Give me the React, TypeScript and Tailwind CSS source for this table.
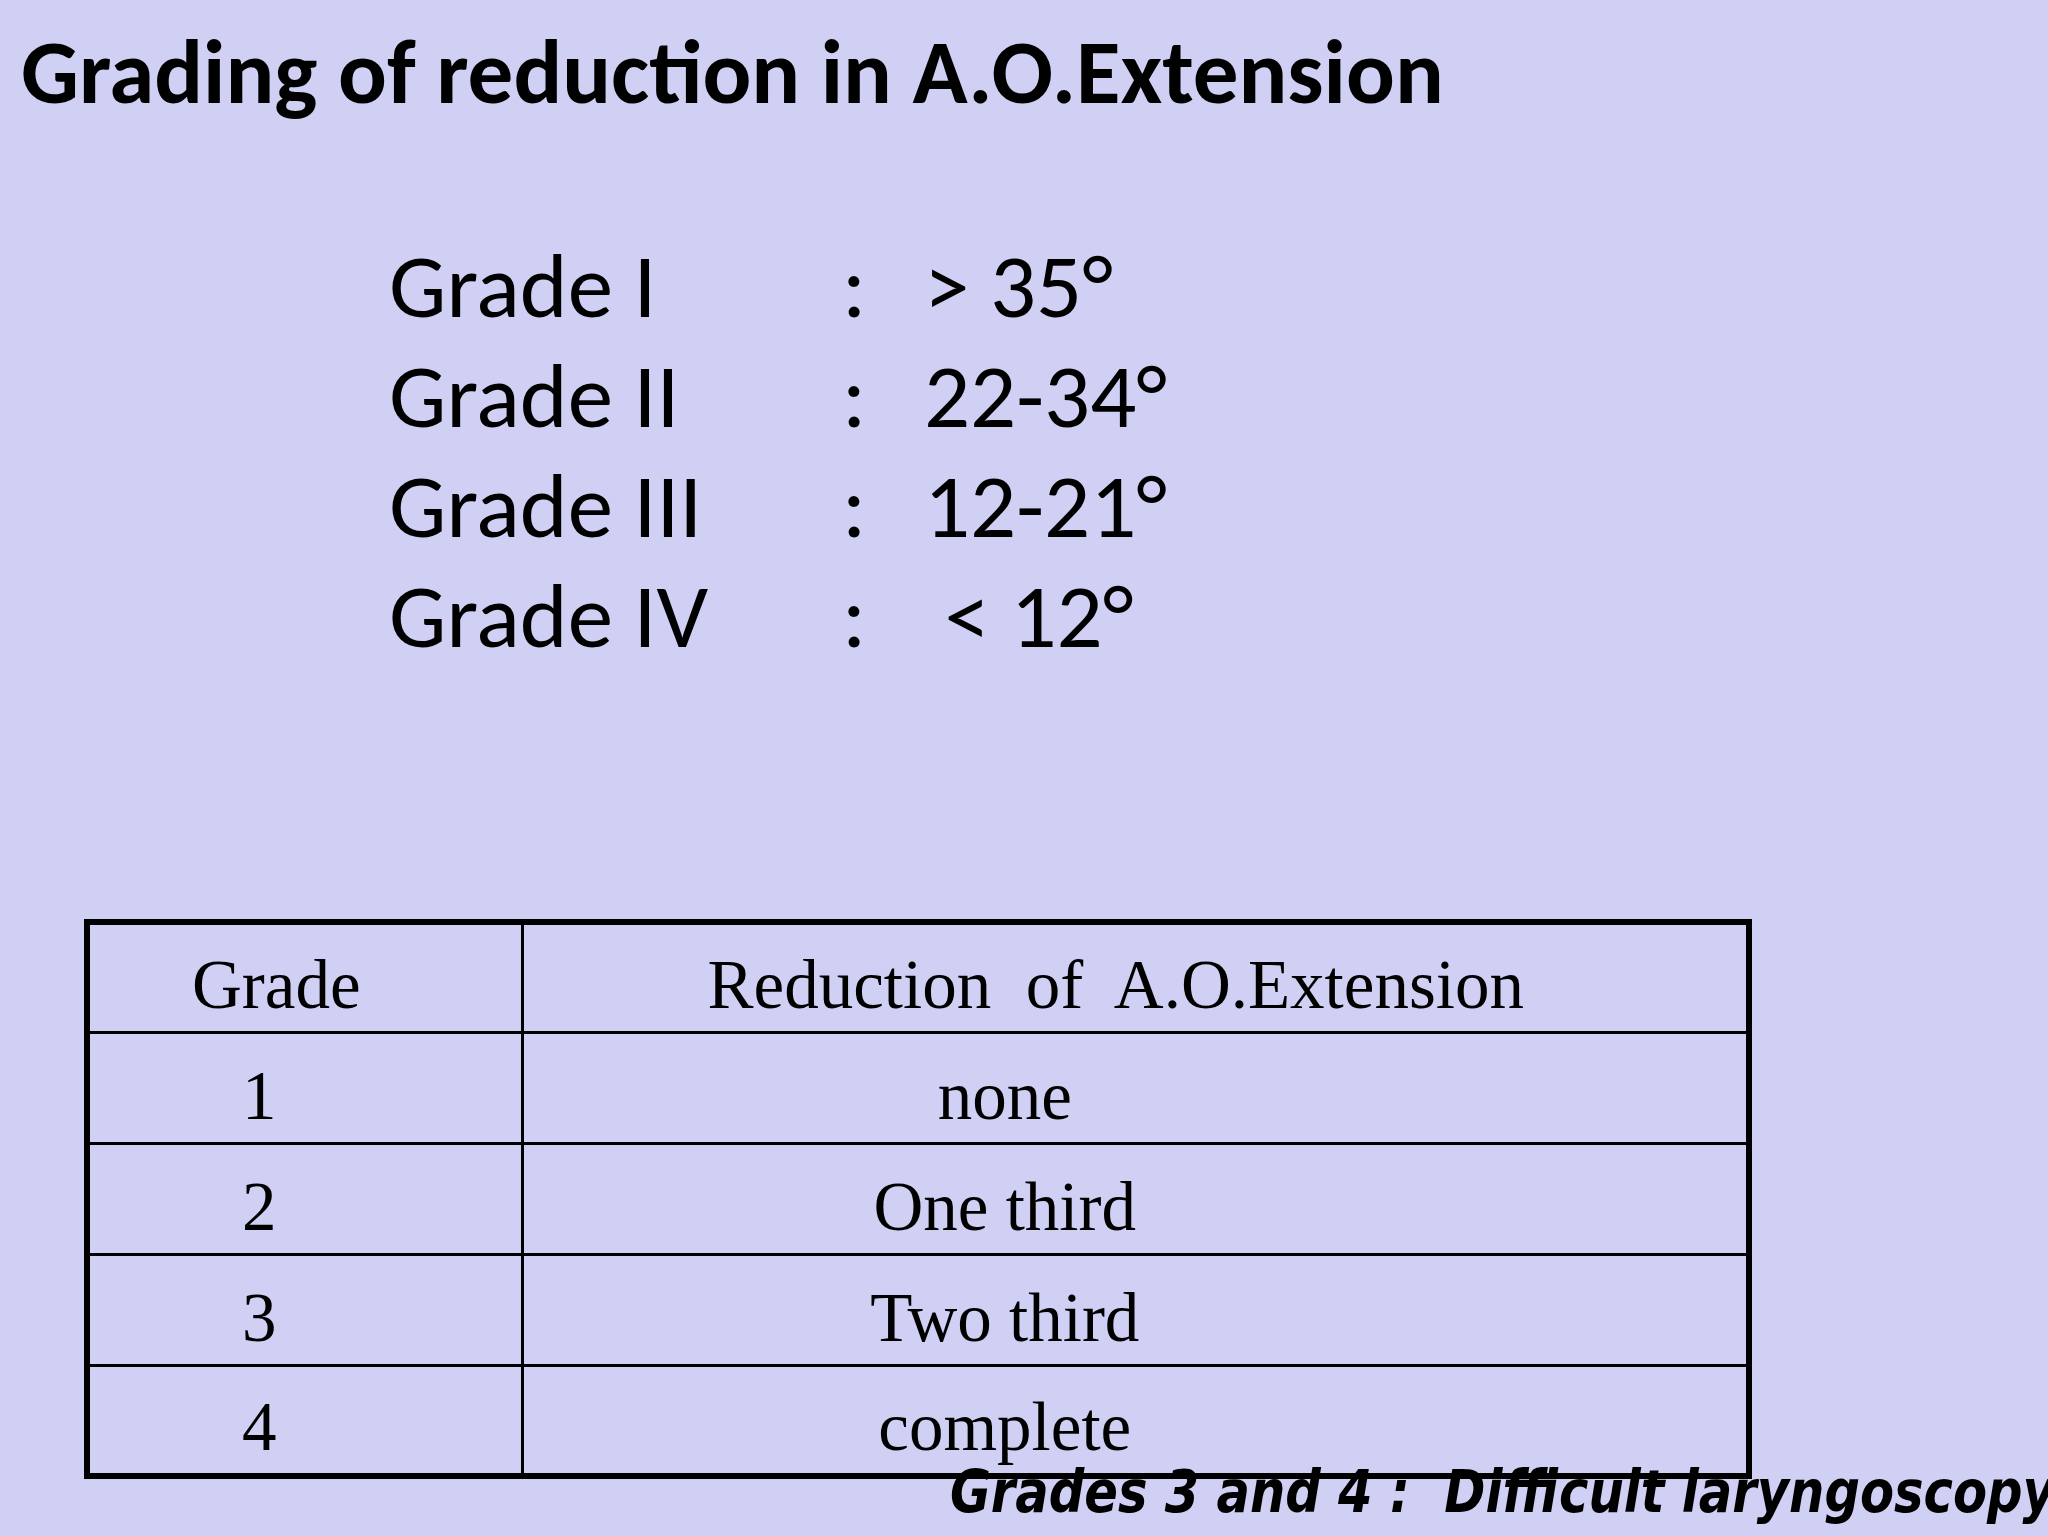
const grades = [
  { label: 'Grade I', value: '> 35°' },
  { label: 'Grade II', value: '22-34°' },
  { label: 'Grade III', value: '12-21°' },
  { label: 'Grade IV', value: ' < 12°' },
];

const rows = [
  { grade: '1', reduction: 'none' },
  { grade: '2', reduction: 'One third' },
  { grade: '3', reduction: 'Two third' },
  { grade: '4', reduction: 'complete' },
];

const sans = "font-['Carlito','DejaVu_Sans_Condensed','Liberation_Sans',sans-serif]";
const serif = "font-['Liberation_Serif','Times_New_Roman',serif]";

export default function App() {
  return (
    <div className="relative w-[2048px] h-[1536px] overflow-hidden bg-[#cfd0f3] text-black">
      {/* Titulo */}
      <h1 className={`${sans} pl-[21px] pt-[17px] text-[91px] font-bold leading-[110px]`}>
        Grading of reduction in A.O.Extension
      </h1>

      {/* Lista de grados */}
      <div className={`${sans} ml-[389px] mt-[104px] grid grid-cols-[453px_82px_auto] text-[91px] leading-[110px]`}>
        {grades.map((g) => (
          <div key={g.label} className="contents">
            <span>{g.label}</span>
            <span>:</span>
            <span className="whitespace-pre">{g.value}</span>
          </div>
        ))}
      </div>

      {/* Tabla */}
      <table className={`${serif} ml-[84px] mt-[248px] w-[1668px] border-collapse border-[6px] border-black text-[69px]`}>
        <thead>
          <tr className="h-[110px]">
            <th className="w-[435px] border-[3px] border-black pr-[58px] pb-[11px] align-bottom font-normal leading-none">
              Grade
            </th>
            <th className="border-[3px] border-black pr-[38px] pb-[11px] align-bottom font-normal leading-none whitespace-pre">
              Reduction  of  A.O.Extension
            </th>
          </tr>
        </thead>
        <tbody>
          {rows.map((r) => (
            <tr key={r.grade} className="h-[111px]">
              <td className="border-[3px] border-black pr-[92px] pb-[11px] text-center align-bottom leading-none">
                {r.grade}
              </td>
              <td className="border-[3px] border-black pr-[260px] pb-[11px] text-center align-bottom leading-none">
                {r.reduction}
              </td>
            </tr>
          ))}
        </tbody>
      </table>

      {/* Nota al pie */}
      <p className="-mt-[17px] ml-[950px] w-max origin-left scale-x-[0.935] whitespace-pre font-['DejaVu_Sans_Condensed','DejaVu_Sans',sans-serif] text-[59px] font-bold italic leading-none">
        Grades 3 and 4 :  Difficult laryngoscopy
      </p>
    </div>
  );
}
